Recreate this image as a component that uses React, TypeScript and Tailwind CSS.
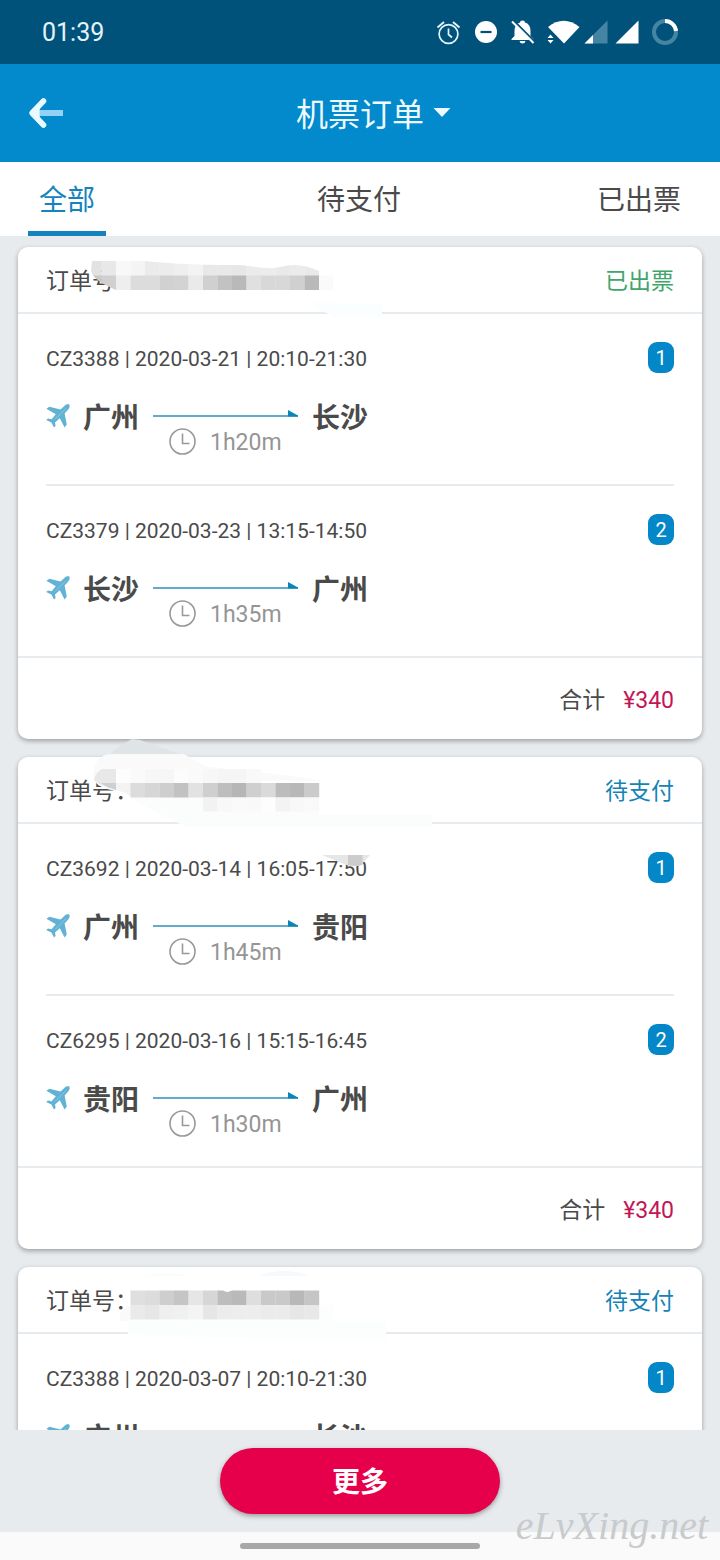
import type { ReactNode } from "react";

type Leg = {
  flight: string;
  date: string;
  time: string;
  from: string;
  to: string;
  duration: string;
};

type Order = {
  status: "已出票" | "待支付";
  total?: number;
  legs: Leg[];
  mask: ReactNode;
};

const CELL = 14.5;

function Cells({ x, y, h = CELL, colors }: { x: number; y: number; h?: number; colors: string[] }) {
  return (
    <>
      {colors.map((color, i) => (
        <rect key={i} x={x + i * CELL} y={y} width={CELL + 0.2} height={h} fill={color} />
      ))}
    </>
  );
}

const firstMask = (
  <>
    <path d="M290 56 L364 57 V70 H316 Z" fill="#fbfefe" />
    <clipPath id="mask-a">
      <path d="M74 14 H128 C160 18 205 18 222 18 C240 20 250 23 262 20 C276 16 288 18 301 24 V43 H98 C88 38 76 34 73 24 Z" />
    </clipPath>
    <g clipPath="url(#mask-a)">
      <Cells
        x={69}
        y={14}
        h={15}
        colors={["#e2e2e2", "#e8e8e8", "#f8f8f8", "#f4f4f4", "#ebebeb", "#ececec", "#efefef", "#f3f3f3", "#e8e8e8", "#e8e8e8", "#e7e7e7", "#ebebeb", "#ececec", "#e9e9e9", "#ebebeb", "#e9e9e9"]}
      />
      <Cells
        x={69}
        y={28.5}
        colors={["#c9c9c9", "#d0d0d0", "#eeeeee", "#dcdcdc", "#dcdcdc", "#d1d1d1", "#d3d3d3", "#eaeaea", "#d0d0d0", "#c2c2c2", "#b9b9b9", "#e0e0e0", "#d8d8d8", "#d8d8d8", "#d0d0d0", "#b9b9b9"]}
      />
    </g>
    <rect x="301" y="28.5" width="14" height="14.5" fill="#fafafa" />
  </>
);

const secondMask = (
  <>
    <path d="M95 -6 L105 -13 L114 -18 L122 -17 L170 0 H90 Z" fill="#dfe4e7" />
    <path d="M76 23 C74 8 80 -3 94 -3 H166 L187 9 C230 15 262 16 306 24 H98 V34 C88 32 80 30 76 23 Z" fill="#fafafa" />
    <path d="M112 40 H301 V58 H414 V69 H166 C150 60 128 52 112 40 Z" fill="#fbfdfd" />
    <path d="M76 23 C77 18 80 14 84 12 H98 V32 C90 30 80 28 76 23 Z" fill="#e8e8e8" />
    <Cells x={98} y={12} colors={["#fdfdfd", "#fafafa", "#f7f7f7", "#f6f6f6", "#fcfcfc", "#fafafa", "#f7f7f7", "#f5f5f5", "#f5f5f5", "#f9f9f9"]} />
    <path d="M83 26 H98 V33 Q89 31 83 26 Z" fill="#cfcfcf" />
    <path d="M98 26 H113 V40 L108 36 L98 33 Z" fill="#f3f3f3" />
    <Cells
      x={112.5}
      y={26}
      colors={["#dcdcdc", "#d6d6d6", "#cecece", "#c2c2c2", "#e2e2e2", "#cfcfcf", "#bebebe", "#b6b6b6", "#cfcfcf", "#dadada", "#bcbcbc", "#b8b8b8", "#cbcbcb"]}
    />
    <Cells x={185} y={40.5} h={14} colors={["#f2f2f2", "#f8f8f8", "#fafafa", "#f9f9f9", "#fdfdfd", "#f3f3f3", "#f8f8f8", "#f9f9f9"]} />
    <path d="M304 98 H352 L343 108 Q334 111 326 107 Z" fill="#e6e6e6" />
    <path d="M330 98 H344.500 V108 Q337 110 330 108 Z" fill="#cccccc" />
  </>
);

const thirdMask = (
  <>
    <path d="M127 9 Q150 3 170 9 Z" fill="#fafbfb" />
    <path d="M240 9 Q266 -1 292 9 Z" fill="#f7f9fa" />
    <path d="M108 38 H315 V54 H368 V72 H240 L110 68 Z" fill="#fcfefe" />
    <path d="M108 40 H113 V54 H102 V46 Z" fill="#fafafa" />
    <Cells
      x={112.5}
      y={23.5}
      colors={["#dfdfdf", "#dcdcdc", "#cecece", "#c5c5c5", "#e6e6e6", "#d6d6d6", "#bdbdbd", "#b9b9b9", "#dedede", "#c9c9c9", "#c9c9c9", "#b8b8b8", "#c5c5c5"]}
    />
    <Cells
      x={112.5}
      y={38}
      colors={["#eaeaea", "#e6e6e6", "#efefef", "#f0f0f0", "#f4f4f4", "#e6e6e6", "#ececec", "#ededed", "#ededed", "#ebebeb", "#ebebeb", "#e6e6e6", "#e8e8e8"]}
    />
    <path d="M205 23 H214 Q209 27 205 23 Z" fill="#fff" />
  </>
);

const orders: Order[] = [
  {
    status: "已出票",
    total: 340,
    mask: firstMask,
    legs: [
      { flight: "CZ3388", date: "2020-03-21", time: "20:10-21:30", from: "广州", to: "长沙", duration: "1h20m" },
      { flight: "CZ3379", date: "2020-03-23", time: "13:15-14:50", from: "长沙", to: "广州", duration: "1h35m" },
    ],
  },
  {
    status: "待支付",
    total: 340,
    mask: secondMask,
    legs: [
      { flight: "CZ3692", date: "2020-03-14", time: "16:05-17:50", from: "广州", to: "贵阳", duration: "1h45m" },
      { flight: "CZ6295", date: "2020-03-16", time: "15:15-16:45", from: "贵阳", to: "广州", duration: "1h30m" },
    ],
  },
  {
    status: "待支付",
    mask: thirdMask,
    legs: [{ flight: "CZ3388", date: "2020-03-07", time: "20:10-21:30", from: "广州", to: "长沙", duration: "1h20m" }],
  },
];

function PlaneIcon() {
  return (
    <svg className="h-6 w-6 shrink-0" viewBox="0 0 24 24" aria-hidden="true">
      <path
        d="M23.400 0.600 C22 0 20 0.400 18.600 1.800 L14.600 5.400 L3.400 2.800 L0.400 4.800 L9.800 10.200 L5.600 15.200 L2 14.600 L0.200 16 L5.400 18.600 L8 23.600 L9.600 22 L9 18.400 L13.800 14.200 L18.600 23.400 L20.800 20.600 L18.600 9.400 L22.200 5.400 C23.600 4 24 2 23.400 0.600 Z"
        fill="#62b2d6"
      />
      <path d="M20 4.500 L9 15.500" stroke="#a9d6ea" strokeWidth="0.6" />
    </svg>
  );
}

function StatusIcons() {
  return (
    <div className="flex items-center">
      <svg className="h-8 w-[66px]" viewBox="434 16 66 32" fill="none" aria-hidden="true">
        <g stroke="#e4f4fa" strokeWidth="1.700">
          <circle cx="448.500" cy="34" r="9.400" />
          <path d="M448.500 28.500 V34.500 L452 37.500" />
          <path d="M437.500 27.500 L444 22 M459.500 27.500 L453 22" strokeWidth="2" />
        </g>
        <circle cx="486" cy="32" r="11" fill="#fff" />
        <path d="M480.500 32 H491.500" stroke="#00527b" strokeWidth="2.200" />
      </svg>
      <svg className="h-8 w-[46px]" viewBox="500 16 46 32" aria-hidden="true">
        <path d="M522.500 20.500 Q525 20.500 525 22.500 Q530.500 24 530.500 31 V36 L533.500 39 V40 H511.500 V39 L514.500 36 V31 Q514.500 24 520 22.500 Q520 20.500 522.500 20.500 Z" fill="#fff" />
        <path d="M519.500 41 H525.500 Q525 43.500 522.500 43.500 Q520 43.500 519.500 41 Z" fill="#fff" />
        <path d="M513.500 20.500 L535 42" stroke="#00527b" strokeWidth="2" />
        <path d="M512 21.500 L533.500 43" stroke="#fff" strokeWidth="2" />
      </svg>
      <svg className="h-8 w-[94px]" viewBox="546 16 94 32" aria-hidden="true">
        <path d="M548 27 Q563.500 14.500 579.500 27 L564 43.500 Z" fill="#fff" />
        <path d="M547.500 38 L550.500 34.500 L553.500 38 Z M547.500 40 H553.500 L550.500 43.500 Z" fill="#fff" />
        <path d="M607.500 20.500 V43.500 H584.500 Z" fill="#4585a3" />
        <path d="M593 35 V43.500 H584.500 Z" fill="#fff" />
        <path d="M638.500 20.500 V43.500 H615.500 Z" fill="#fff" />
      </svg>
      <svg className="h-8 w-[40px]" viewBox="640 16 40 32" fill="none" aria-hidden="true">
        <circle cx="665" cy="32" r="11" stroke="#4585a3" strokeWidth="4" />
        <path d="M665 21 A11 11 0 0 1 676 31" stroke="#fff" strokeWidth="4" />
      </svg>
    </div>
  );
}

function LegRow({ leg, index, last }: { leg: Leg; index: number; last: boolean }) {
  return (
    <li className={last ? "border-b-2 border-[#e7ebed] px-7" : "px-7"}>
      <div className={last ? "pt-7 pb-[29px]" : "border-b-2 border-[#e7ebed] pt-7 pb-[29px]"}>
        <div className="flex h-[31px] items-center justify-between">
          <p className="pt-1 text-[21px]">
            {leg.flight} | {leg.date} | {leg.time}
          </p>
          <span className="flex h-[31px] w-[26px] items-center justify-center rounded-[9px] bg-[#0487c8] text-[20px] text-white">
            {index}
          </span>
        </div>
        <div className="mt-6 flex items-start text-[28px] leading-[44px] font-bold">
          <div className="flex h-[38px] items-center">
            <PlaneIcon />
          </div>
          <span className="ml-[13px]">{leg.from}</span>
          <div className="mt-3 ml-3.5 w-[145px] font-normal">
            <svg className="block h-2.5 w-full" viewBox="0 0 145 10" aria-hidden="true">
              <path d="M0 7 H145" stroke="#62acca" strokeWidth="2" />
              <path d="M135 1 L145 6.500 V7.500 H135 Z" fill="#0b84b8" />
            </svg>
            <div className="mt-2 flex h-7 items-center gap-[14px] pl-4 text-[23px] text-[#959595]">
              <svg className="h-[27px] w-[27px]" viewBox="0 0 27 27" fill="none" stroke="#999" strokeWidth="1.600" aria-hidden="true">
                <circle cx="13.500" cy="13.500" r="12.500" />
                <path d="M13.500 5.500 V15.500 H20.500" />
              </svg>
              <span className="pt-1 leading-7">{leg.duration}</span>
            </div>
          </div>
          <span className="ml-3.5">{leg.to}</span>
        </div>
      </div>
    </li>
  );
}

function OrderCard({ order }: { order: Order }) {
  return (
    <article className="relative rounded-[10px] bg-white shadow-[0_2px_5px_rgba(0,0,0,0.32)]">
      <header className="flex h-[67px] items-center justify-between border-b-2 border-[#e7ebed] px-7 pt-1.5 text-[23px]">
        <h2>订单号：</h2>
        <span className={order.status === "已出票" ? "text-[#3ea56b]" : "text-[#1583b7]"}>{order.status}</span>
      </header>
      <ul>
        {order.legs.map((leg, i) => (
          <LegRow key={i} leg={leg} index={i + 1} last={i === order.legs.length - 1} />
        ))}
      </ul>
      {order.total !== undefined && (
        <footer className="flex h-[81px] items-center justify-end gap-[18px] px-7 pt-1.5 text-[23px]">
          <span>合计</span>
          <span className="text-[#c21757]">¥{order.total}</span>
        </footer>
      )}
      <svg className="pointer-events-none absolute -top-5 left-0 h-[160px] w-[450px]" viewBox="0 -20 450 160" aria-hidden="true">
        {order.mask}
      </svg>
    </article>
  );
}

export default function App() {
  return (
    <div className="flex h-screen flex-col bg-[#e7ebee] font-[Roboto,'Noto_Sans_CJK_SC',sans-serif] text-[#4a4a4a]">
      <div className="flex h-16 shrink-0 items-center justify-between bg-[#00527b] pr-10 pl-[42px] text-[25px] text-[#e4f4fa]">
        <time className="pt-0.5">01:39</time>
        <StatusIcons />
      </div>
      <header className="grid h-[98px] shrink-0 grid-cols-[1fr_auto_1fr] items-center bg-[#028acd] px-7 text-[#eefaff]">
        <button type="button" aria-label="返回" className="w-9">
          <svg className="h-8 w-9" viewBox="0 0 36 32" fill="none" aria-hidden="true">
            <path d="M11 16 H35" stroke="#92d2f4" strokeWidth="6" />
            <path d="M15.500 4 L4 16 L15.500 28" stroke="#ebfaff" strokeWidth="5.600" strokeLinejoin="round" strokeLinecap="round" />
            <path d="M3 16 L12.500 8 Q10.500 16 12.500 24 Z" fill="#ebfaff" />
          </svg>
        </button>
        <button type="button" className="flex items-center gap-2 pl-7 text-[32px] leading-10">
          <span className="pt-1">机票订单</span>
          <svg className="h-3 w-5" viewBox="0 0 20 12" fill="#eefaff" aria-hidden="true">
            <path d="M1.500 1 H18.500 L10 10 Z" />
          </svg>
        </button>
        <span />
      </header>
      <nav className="flex h-[74px] shrink-0 justify-between bg-white px-7 text-[28px]">
        <button type="button" className="border-b-[5px] border-[#1583bd] px-[11px] pt-2 text-[#1583bd]">
          全部
        </button>
        <button type="button" className="border-b-[5px] border-transparent pt-2 pl-4">
          待支付
        </button>
        <button type="button" className="border-b-[5px] border-transparent pt-2 pr-[11px] pl-px">
          已出票
        </button>
      </nav>
      <main className="min-h-0 flex-1 overflow-y-auto px-[18px] pt-[11px] [scrollbar-width:none]">
        <div className="flex flex-col gap-[18px]">
          {orders.map((order, i) => (
            <OrderCard key={i} order={order} />
          ))}
        </div>
      </main>
      <div className="relative shrink-0">
        <div className="flex h-[102px] items-center justify-center">
          <button
            type="button"
            className="h-[66px] w-[280px] rounded-full bg-[#e6004b] pt-1 text-[28px] font-bold text-white shadow-[0_2px_5px_rgba(0,0,0,0.35)]"
          >
            更多
          </button>
        </div>
        <div className="flex h-7 items-center justify-center bg-[#fafafa]">
          <div className="h-1.5 w-60 rounded-full bg-[#a8a8a8]" />
        </div>
        <span className="absolute right-3 bottom-2.5 font-['Liberation_Serif',cursive] text-[40px] leading-[48px] text-[#c8cacc] italic">
          eLvXing.net
        </span>
      </div>
    </div>
  );
}
